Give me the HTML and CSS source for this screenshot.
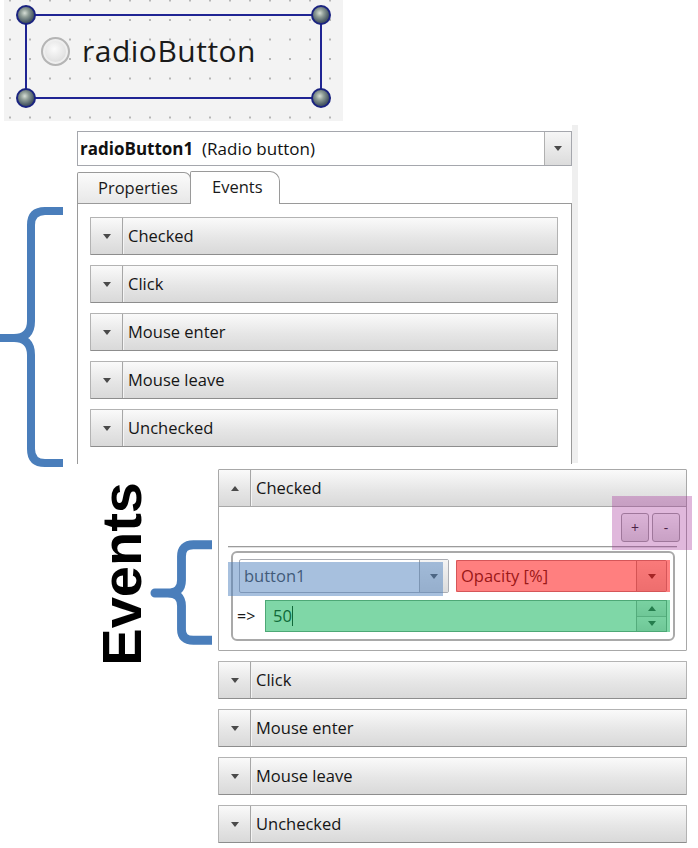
FILE: index.html
```html
<!DOCTYPE html>
<html>
<head>
<meta charset="utf-8">
<link rel="stylesheet" href="styles.css">
</head>
<body>
<div class="canvas">
  <div class="sel">
    <span class="h tl"></span><span class="h tr"></span><span class="h bl"></span><span class="h br"></span>
    <div class="rb"><span class="radio"></span><span class="rb-text">radioButton</span></div>
  </div>
</div>

<div class="row2">
  <svg class="brace-big" viewBox="0 0 63 260"><path d="M63,4 H45 Q31,4 31,18 V114 Q31,131 14,131 H0 H14 Q31,131 31,148 V242 Q31,256 45,256 H63" fill="none" stroke="#4a7ebb" stroke-width="8" stroke-linejoin="round"/></svg>
  <div class="panel">
    <div class="combo">
      <div class="combo-text"><b>radioButton1</b>&nbsp; (Radio button)</div>
      <div class="combo-btn"><span class="tri-down"></span></div>
    </div>
    <div class="tabs">
      <div class="tab props">Properties</div>
      <div class="tab active">Events</div>
    </div>
    <div class="tab-body">
      <div class="ev"><div class="ev-tog"><span class="tri-down"></span></div><div class="ev-name">Checked</div></div>
      <div class="ev"><div class="ev-tog"><span class="tri-down"></span></div><div class="ev-name">Click</div></div>
      <div class="ev"><div class="ev-tog"><span class="tri-down"></span></div><div class="ev-name">Mouse enter</div></div>
      <div class="ev"><div class="ev-tog"><span class="tri-down"></span></div><div class="ev-name">Mouse leave</div></div>
      <div class="ev"><div class="ev-tog"><span class="tri-down"></span></div><div class="ev-name">Unchecked</div></div>
    </div>
  </div>
</div>

<div class="row3">
  <div class="label-col"><div class="events-label">Events</div></div>
  <svg class="brace-small" viewBox="0 0 63 106"><path d="M63,4 H44 Q32,4 32,16 V40 Q32,53 18,53 H5 H18 Q32,53 32,66 V90 Q32,101 44,101 H63" fill="none" stroke="#4a7ebb" stroke-width="9" stroke-linejoin="round" stroke-linecap="round"/></svg>
  <div class="list">
    <div class="ev-open">
      <div class="ev-head"><div class="ev-tog"><span class="tri-up"></span></div><div class="ev-name">Checked</div></div>
      <div class="ev-body">
        <div class="pm"><div class="pmb">+</div><div class="pmb">-</div></div>
        <div class="sep"></div>
        <div class="group">
          <div class="grow1">
            <div class="combo2 c-b1"><div class="txt">button1</div><div class="dd"><span class="tri-down"></span></div></div>
            <div class="combo2 c-op"><div class="txt">Opacity [%]</div><div class="dd"><span class="tri-down"></span></div></div>
          </div>
          <div class="grow2">
            <div class="arrow">=&gt;</div>
            <div class="spin">
              <div class="val">50<span class="caret"></span></div>
              <div class="sb"><div class="sb-up"><span class="tri-up"></span></div><div class="sb-dn"><span class="tri-down"></span></div></div>
            </div>
          </div>
        </div>
      </div>
      <div class="ov ov-pink"></div>
      <div class="ov ov-blue"></div>
      <div class="ov ov-red"></div>
      <div class="ov ov-green"></div>
    </div>
    <div class="ev"><div class="ev-tog"><span class="tri-down"></span></div><div class="ev-name">Click</div></div>
    <div class="ev"><div class="ev-tog"><span class="tri-down"></span></div><div class="ev-name">Mouse enter</div></div>
    <div class="ev"><div class="ev-tog"><span class="tri-down"></span></div><div class="ev-name">Mouse leave</div></div>
    <div class="ev"><div class="ev-tog"><span class="tri-down"></span></div><div class="ev-name">Unchecked</div></div>
  </div>
</div>
</body>
</html>
```

FILE: styles.css
```css
* { box-sizing: border-box; }
html, body { margin: 0; padding: 0; background: #fff; }
body {
  width: 698px; height: 848px; overflow: hidden;
  font-family: "Open Sans", "Noto Sans", sans-serif; color: #222;
}

/* designer canvas */
.canvas {
  margin-left: 4px; width: 339px; height: 121px;
  background-color: #f3f3f3;
  background-image: radial-gradient(circle, #b5b5b5 0.9px, transparent 1.3px);
  background-size: 20px 19.5px;
  background-position: -4px -9.25px;
  padding: 14px 0 0 21px;
}
.sel { position: relative; width: 297px; height: 85px; border: 2px solid #1f2493; }
.h {
  position: absolute; width: 20px; height: 20px; border-radius: 50%;
  border: 2px solid #1a2380;
  background: radial-gradient(circle at 42% 38%, #d6ded6 0%, #8e9c96 30%, #4c5c66 65%, #2c3a48 100%);
}
.h.tl { left: -11px; top: -11px; }
.h.tr { right: -11px; top: -11px; }
.h.bl { left: -11px; bottom: -11px; }
.h.br { right: -11px; bottom: -11px; }
.rb { display: flex; align-items: center; margin: 17px 0 0 14px; height: 36px; }
.radio {
  flex: none; width: 29px; height: 29px; border-radius: 50%;
  border: 2px solid #b5b5b5;
  box-shadow: inset 0 0 0 2px #efefef;
  background: radial-gradient(circle at 45% 40%, #fbfbfb 0%, #e6e6e6 50%, #cdcdcd 100%);
}
.rb-text { margin-left: 12px; font-size: 30px; letter-spacing: 0.5px; line-height: 36px; color: #1a1a1a; }

/* property panel */
.row2 { display: flex; align-items: flex-start; }
.brace-big { flex: none; width: 63px; height: 260px; margin-top: 86px; margin-bottom: -4px; }
.panel {
  flex: none; margin-left: 7px; margin-top: 4px; width: 508px; height: 338px;
  padding: 6px 0 0 7px; border-right: 6px solid #efefef; background: #fff;
}
.combo { display: flex; height: 35px; border: 1px solid #a5a7ad; background: #fff; }
.combo-text { flex: 1; padding-left: 2px; font-size: 17px; line-height: 33px; white-space: nowrap; color: #111; }
.combo-btn {
  width: 27px; border-left: 1px solid #b0b0b0;
  background: linear-gradient(#f6f6f6, #dcdcdc);
  display: flex; align-items: center; justify-content: center;
}
.tri-down { width: 0; height: 0; border-left: 4.5px solid transparent; border-right: 4.5px solid transparent; border-top: 5px solid #4a4a4a; }
.tri-up { width: 0; height: 0; border-left: 4.5px solid transparent; border-right: 4.5px solid transparent; border-bottom: 5px solid #4a4a4a; }

.tabs { display: flex; align-items: flex-end; height: 32px; margin-top: 5px; }
.tab { font-size: 16.5px; color: #1a1a1a; border: 1px solid #9a9a9a; border-bottom: none; line-height: 29px; white-space: nowrap; }
.tab.props {
  width: 114px; height: 31px; padding-left: 20px;
  background: linear-gradient(#fbfbfb, #e8e8e8);
  border-radius: 2px 7px 0 0;
}
.tab.active {
  width: 90px; height: 33px; margin-left: -1px; margin-bottom: -1px; padding-left: 21px;
  background: #fff; border-radius: 2px 10px 0 0; position: relative; z-index: 1;
}
.tab-body {
  height: 261px; border: 1px solid #9a9a9a; border-bottom: none; background: #fff;
  padding: 13px 13px 0 12px; display: flex; flex-direction: column; gap: 10px;
}

/* event rows */
.ev {
  display: flex; height: 38px; flex: none;
  border: 1px solid #b3b3b3; border-bottom-color: #8d8d8d; border-radius: 1px;
  background: linear-gradient(#fafafa, #e6e6e6 55%, #d9d9d9);
}
.ev-tog {
  width: 32px; flex: none; border-right: 1px solid #a6a6a6; box-shadow: 1px 0 0 #f4f4f4;
  display: flex; align-items: center; justify-content: center;
}
.ev-name { padding-left: 5px; font-size: 16.5px; line-height: 36px; white-space: nowrap; color: #151515; }

/* expanded section */
.row3 { display: flex; align-items: flex-start; }
.label-col { flex: none; width: 150px; padding-left: 94px; padding-top: 19px; }
.events-label {
  writing-mode: vertical-rl; transform: rotate(180deg);
  font-family: "Liberation Sans", Arial, sans-serif; font-weight: bold;
  font-size: 56px; line-height: 56px; color: #000;
}
.brace-small { flex: none; width: 62px; height: 106px; margin-top: 77px; }
.list { flex: none; margin-left: 6px; margin-top: 6px; width: 469px; display: flex; flex-direction: column; gap: 10px; }

.ev-open { position: relative; border: 1px solid #a8a8a8; border-radius: 1px; background: #fff; }
.ev-head {
  display: flex; height: 37px; border-bottom: 1px solid #a8a8a8;
  background: linear-gradient(#fafafa, #e6e6e6 55%, #d9d9d9);
}
.ev-body { padding: 6px 6px 9px 9px; }
.pm { display: flex; justify-content: flex-end; gap: 3px; }
.pmb {
  width: 28px; height: 29px; border: 1px solid #9e9e9e; border-radius: 3px;
  background: linear-gradient(#f8f8f8, #dcdcdc);
  font-size: 14px; line-height: 27px; text-align: center; color: #222;
}
.sep { margin-top: 4px; margin-right: 3px; height: 2px; border-top: 1px solid #9c9c9c; border-bottom: 1px solid #e2e2e2; }
.group {
  margin: 3px 5px 0 3px; border: 2px solid #a9a9a9; border-radius: 6px;
  padding: 6px 6px 7px 6px;
}
.grow1 { display: flex; gap: 7px; align-items: flex-start; }
.combo2 { display: flex; height: 34px; border: 1px solid #abadb3; border-radius: 2px; background: #fff; }
.c-b1 { width: 210px; }
.c-op { width: 211px; height: 32px; margin-top: 1px; }
.combo2 .txt { flex: 1; padding-left: 4px; font-size: 16.5px; line-height: 32px; color: #333; white-space: nowrap; }
.c-op .txt { line-height: 30px; }
.combo2 .dd {
  width: 29px; border-left: 1px solid #a8a8a8;
  background: linear-gradient(#f4f4f4, #dcdcdc);
  display: flex; align-items: center; justify-content: center;
}
.c-op .dd { width: 30px; }
.grow2 { display: flex; align-items: center; margin-top: 7px; margin-left: -2px; }
.arrow { width: 28px; font-size: 16px; color: #1a1a1a; }
.spin { flex: 1; height: 32px; display: flex; border: 1px solid #9aa09c; background: #fff; }
.val { flex: 1; padding-left: 7px; font-size: 16.5px; line-height: 30px; color: #222; }
.caret { display: inline-block; width: 1px; height: 20px; background: #222; vertical-align: -4px; }
.sb { width: 30px; border-left: 1px solid #a8a8a8; display: flex; flex-direction: column; }
.sb-up, .sb-dn { flex: 1; display: flex; align-items: center; justify-content: center; background: linear-gradient(#f4f4f4, #dedede); }
.sb-dn { border-top: 1px solid #b0b0b0; }

/* annotation overlays */
.ov { position: absolute; pointer-events: none; }
.ov-pink { left: 393px; top: 26px; width: 80px; height: 54px; background: rgba(160, 40, 150, 0.33); }
.ov-blue { left: 9px; top: 92px; width: 215px; height: 34px; background: rgba(79, 129, 189, 0.5); }
.ov-red { left: 237px; top: 90px; width: 214px; height: 32px; background: rgba(255, 0, 0, 0.5); }
.ov-green { left: 46px; top: 130px; width: 405px; height: 32px; background: rgba(0, 176, 80, 0.5); }
```
